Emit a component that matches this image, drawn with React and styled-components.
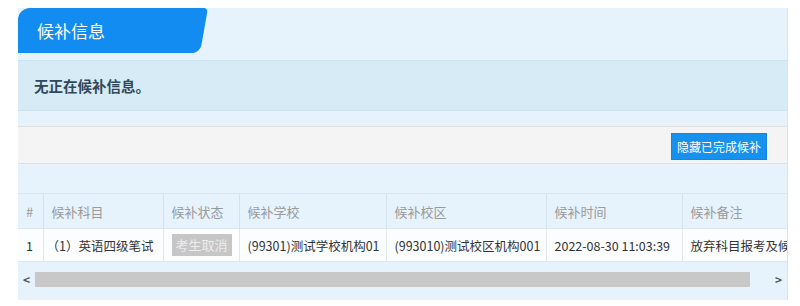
import styled, { createGlobalStyle } from 'styled-components'

const GlobalStyle = createGlobalStyle`
  body {
    margin: 0;
    background: #fff;
    font-family: "Noto Sans CJK SC", "Noto Sans", "Liberation Sans", sans-serif;
  }
`

const Panel = styled.div`
  width: 770px;
  height: 292px;
  margin: 8px 0 0 18px;
  background: #e6f3fd;
  border-right: 1px solid #d3e5f2;
  box-sizing: border-box;
  display: flex;
  flex-direction: column;
  overflow: hidden;
`

const TabBar = styled.div`
  height: 52px;
  display: flex;
  align-items: flex-start;
`

const Tab = styled.div`
  width: 176px;
  height: 45px;
  background: #138cf1;
  color: #fff;
  font-size: 17px;
  line-height: 45px;
  padding-left: 19px;
  border-radius: 12px 0 0 0;
  box-sizing: border-box;
  position: relative;
  &::after {
    content: '';
    position: absolute;
    right: -10px;
    top: 0;
    width: 16px;
    height: 45px;
    background: #138cf1;
    transform: skewX(-10deg);
    border-radius: 0 4px 8px 0;
  }
`

const Alert = styled.div`
  height: 51px;
  background: #d7ebf6;
  border-top: 1px solid #cde3f0;
  border-bottom: 1px solid #cde3f0;
  box-sizing: border-box;
  display: flex;
  align-items: center;
  padding-left: 16px;
  color: #2f4a5c;
  font-size: 14.5px;
  font-weight: bold;
`

const Gap = styled.div`
  height: ${p => p.h}px;
  flex-shrink: 0;
`

const Toolbar = styled.div`
  height: 38px;
  background: #f4f4f4;
  border-top: 1px solid #e0e0e0;
  border-bottom: 1px solid #e0e0e0;
  box-sizing: border-box;
  display: flex;
  align-items: center;
  justify-content: flex-end;
  padding-right: 20px;
`

const Button = styled.button`
  height: 27px;
  padding: 0 5px;
  margin-top: 3px;
  background: #1791ee;
  border: 1px solid #1685dc;
  color: #fff;
  font-family: inherit;
  font-size: 12px;
  cursor: pointer;
`

const TableWrap = styled.div`
  width: 100%;
  overflow: hidden;
`

const Table = styled.table`
  border-collapse: collapse;
  table-layout: fixed;
  width: 900px;
`

const Th = styled.th`
  height: 35px;
  padding: 0 8px;
  text-align: left;
  font-weight: normal;
  font-size: 13px;
  color: #9a9a9a;
  border-top: 1px solid #dbe7f0;
  border-right: 1px solid #d5e2ec;
  white-space: nowrap;
  box-sizing: border-box;
`

const Td = styled.td`
  height: 33px;
  padding: 0 ${p => (p.pad ? p.pad : 8)}px;
  background: #fbfdff;
  color: #333;
  font-size: 12.5px;
  border-top: 1px solid #dbe7f0;
  border-bottom: 1px solid #dbe7f0;
  border-right: 1px solid #e0e8ee;
  white-space: nowrap;
  overflow: hidden;
  box-sizing: border-box;
`

const Badge = styled.span`
  display: inline-block;
  height: 22px;
  line-height: 22px;
  padding: 0 4px;
  background: #c6c6c6;
  color: #ececec;
  font-size: 13px;
`

const ScrollBar = styled.div`
  height: 17px;
  display: flex;
  align-items: stretch;
  font-size: 12px;
  color: #555;
`

const Arrow = styled.div`
  width: 17px;
  display: flex;
  align-items: center;
  justify-content: center;
  font-weight: bold;
`

const Track = styled.div`
  flex: 1;
  display: flex;
  align-items: center;
  padding-right: 20px;
`

const Thumb = styled.div`
  height: 15px;
  flex: 1;
  background: #c8c8c8;
`

const cols = [25, 120, 76, 147, 160, 136, 236]

export default function App() {
  return (
    <>
      <GlobalStyle />
      <Panel>
        <TabBar>
          <Tab>候补信息</Tab>
        </TabBar>
        <Alert>无正在候补信息。</Alert>
        <Gap h={15} />
        <Toolbar>
          <Button>隐藏已完成候补</Button>
        </Toolbar>
        <Gap h={29} />
        <TableWrap>
          <Table>
            <colgroup>
              {cols.map((w, i) => <col key={i} style={{ width: w }} />)}
            </colgroup>
            <thead>
              <tr>
                <Th>#</Th>
                <Th>候补科目</Th>
                <Th>候补状态</Th>
                <Th>候补学校</Th>
                <Th>候补校区</Th>
                <Th>候补时间</Th>
                <Th>候补备注</Th>
              </tr>
            </thead>
            <tbody>
              <tr>
                <Td>1</Td>
                <Td pad={3}>（1）英语四级笔试</Td>
                <Td>
                  <Badge>考生取消</Badge>
                </Td>
                <Td>(99301)测试学校机构01</Td>
                <Td>(993010)测试校区机构001</Td>
                <Td>2022-08-30 11:03:39</Td>
                <Td>放弃科目报考及候补</Td>
              </tr>
            </tbody>
          </Table>
        </TableWrap>
        <Gap h={9} />
        <ScrollBar>
          <Arrow>&lt;</Arrow>
          <Track>
            <Thumb />
          </Track>
          <Arrow>&gt;</Arrow>
        </ScrollBar>
      </Panel>
    </>
  )
}
